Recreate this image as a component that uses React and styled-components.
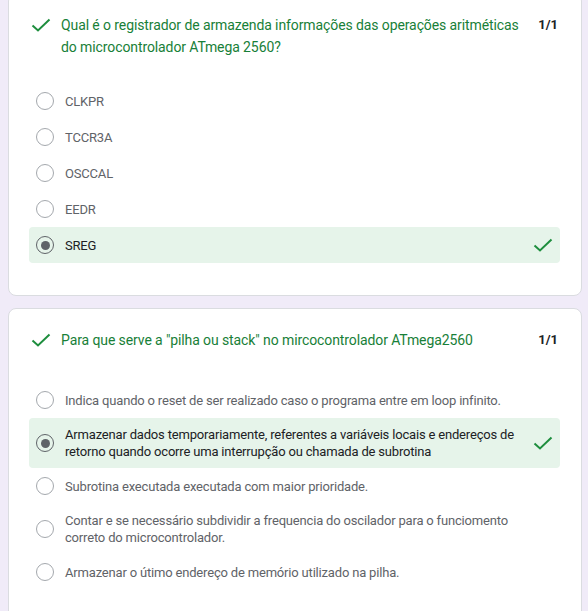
import React from "react";
import styled, { createGlobalStyle } from "styled-components";

const Global = createGlobalStyle`
  html, body { margin: 0; padding: 0; background: #f0ebf8; }
  body { font-family: Roboto, "Noto Sans", Arial, sans-serif; overflow: hidden; }
`;

const Page = styled.div`
  display: flex;
  flex-direction: column;
  gap: 12px;
  padding: 0 6px 0 8px;
  margin-top: -7px;
`;

const Card = styled.section`
  background: #fff;
  border: 1px solid #dadce0;
  border-radius: 8px;
  padding: 20px 21px 32px 20px;
  display: flex;
  flex-direction: column;
  gap: ${(p) => p.$gap}px;
`;

const Header = styled.div`
  display: flex;
  align-items: flex-start;
  padding-right: 2px;
`;

const QIcon = styled.svg`
  flex: none;
  width: 24px;
  height: 24px;
  margin-top: -1px;
`;

const QText = styled.div`
  flex: 1;
  margin-left: 8px;
  font-size: 14px;
  line-height: 22px;
  letter-spacing: -0.1px;
  color: #188038;
  padding-right: 4px;
`;

const Score = styled.div`
  flex: none;
  font-size: 13px;
  font-weight: 700;
  line-height: 22px;
  color: #202124;
`;

const Options = styled.div`
  display: flex;
  flex-direction: column;
`;

const Row = styled.div`
  display: flex;
  align-items: center;
  min-height: 36px;
  box-sizing: border-box;
  padding: 8px 5px 8px 7px;
  border-radius: 4px;
  background: ${(p) => (p.$correct ? "#e6f4ea" : "transparent")};
`;

const Radio = styled.span`
  flex: none;
  width: 18px;
  height: 18px;
  box-sizing: border-box;
  border-radius: 50%;
  border: 1.5px solid ${(p) => (p.$checked ? "#5f6368" : "#a4a8ad")};
  display: flex;
  align-items: center;
  justify-content: center;
  &::after {
    content: "";
    width: 9px;
    height: 9px;
    border-radius: 50%;
    background: ${(p) => (p.$checked ? "#5f6368" : "transparent")};
  }
`;

const OText = styled.span`
  flex: 1;
  margin-left: 11px;
  font-size: 13px;
  line-height: 17px;
  letter-spacing: -0.18px;
  color: ${(p) => (p.$checked ? "#202124" : "#5f6368")};
`;

const RowIcon = styled.svg`
  flex: none;
  width: 24px;
  height: 24px;
  margin: -4px 0 -4px 6px;
`;

const Check = ({ as: C, show = true }) => (
  <C viewBox="0 0 24 24">
    {show && (
      <polyline
        points="3.5,12.5 9,17.5 20.5,6.5"
        fill="none"
        stroke="#1e8e3e"
        strokeWidth="2"
      />
    )}
  </C>
);

const questions = [
  {
    text: "Qual é o registrador de armazenda informações das operações aritméticas do microcontrolador ATmega 2560?",
    gap: 25,
    options: ["CLKPR", "TCCR3A", "OSCCAL", "EEDR", "SREG"],
    answer: 4,
  },
  {
    text: 'Para que serve a "pilha ou stack" no mircocontrolador ATmega2560',
    gap: 30,
    options: [
      "Indica quando o reset de ser realizado caso o programa entre em loop infinito.",
      "Armazenar dados temporariamente, referentes a variáveis locais e endereços de retorno quando ocorre uma interrupção ou chamada de subrotina",
      "Subrotina executada executada com maior prioridade.",
      "Contar e se necessário subdividir a frequencia do oscilador para o funciomento correto do microcontrolador.",
      "Armazenar o útimo endereço de memório utilizado na pilha.",
    ],
    answer: 1,
  },
];

export default function App() {
  return (
    <>
      <Global />
      <Page>
        {questions.map((q, qi) => (
          <Card key={qi} $gap={q.gap}>
            <Header>
              <Check as={QIcon} />
              <QText>{q.text}</QText>
              <Score>1/1</Score>
            </Header>
            <Options>
              {q.options.map((o, i) => {
                const sel = i === q.answer;
                return (
                  <Row key={i} $correct={sel}>
                    <Radio $checked={sel} />
                    <OText $checked={sel}>{o}</OText>
                    <Check as={RowIcon} show={sel} />
                  </Row>
                );
              })}
            </Options>
          </Card>
        ))}
      </Page>
    </>
  );
}
